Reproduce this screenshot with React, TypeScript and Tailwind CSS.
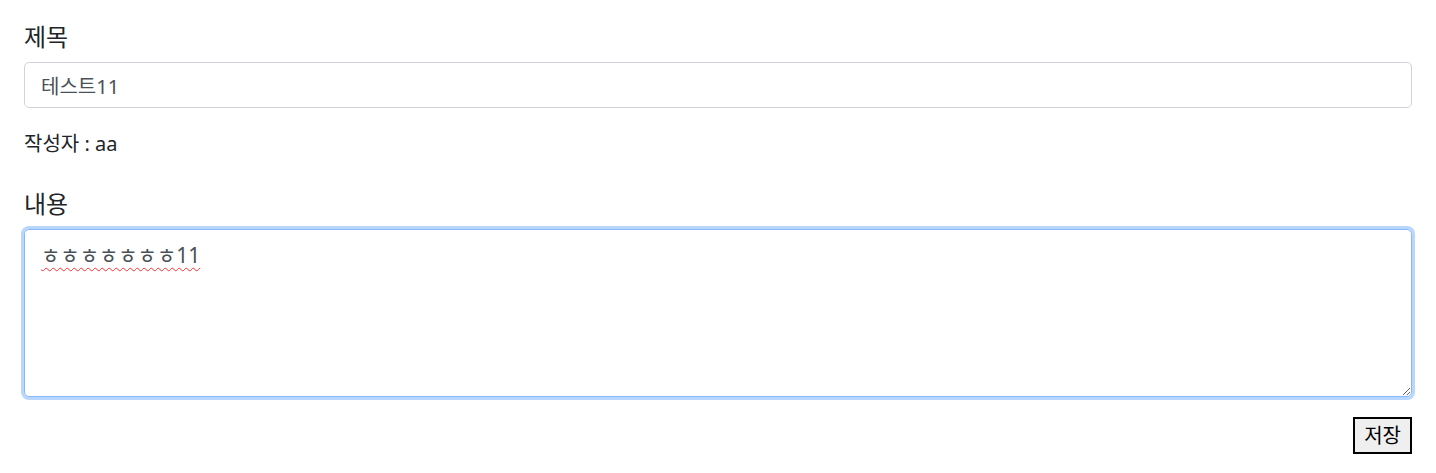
export default function App() {
    return (
        <div className="min-h-screen bg-white px-6 pt-5 text-[#212529] font-['Noto_Sans','Noto_Sans_CJK_KR',sans-serif]">
            <form onSubmit={(e) => e.preventDefault()}>
                <label className="block text-[24px] leading-[34px] mb-2">제목</label>
                <input
                    type="text"
                    defaultValue="테스트11"
                    className="block w-full h-[46px] rounded-[5px] border border-[#ced4da] px-4 text-[20px] text-[#495057] outline-none font-['Noto_Sans','Noto_Sans_CJK_KR',sans-serif]"
                />

                <p className="mt-[22px] text-[20px] leading-[27px]">작성자 : aa</p>

                <label className="block mt-[30px] text-[24px] leading-[34px] mb-2">내용</label>
                <textarea
                    defaultValue="ㅎㅎㅎㅎㅎㅎㅎ11"
                    className="block w-full h-[168px] rounded-[5px] border border-[#86b7fe] px-4 pt-[10px] text-[21px] leading-[30px] text-[#495057] outline-none shadow-[0_0_0_3px_#b9d6fc] underline decoration-wavy decoration-red-500 decoration-1 underline-offset-4 font-['Noto_Sans','Noto_Sans_CJK_KR',sans-serif]"
                />

                <div className="flex justify-end mt-[20px]">
                    <button
                        type="submit"
                        className="h-[37px] px-[9px] border-2 border-black bg-[#efefef] text-[20px] leading-none text-black font-['Noto_Sans','Noto_Sans_CJK_KR',sans-serif]"
                    >
                        저장
                    </button>
                </div>
            </form>
        </div>
    );
}
